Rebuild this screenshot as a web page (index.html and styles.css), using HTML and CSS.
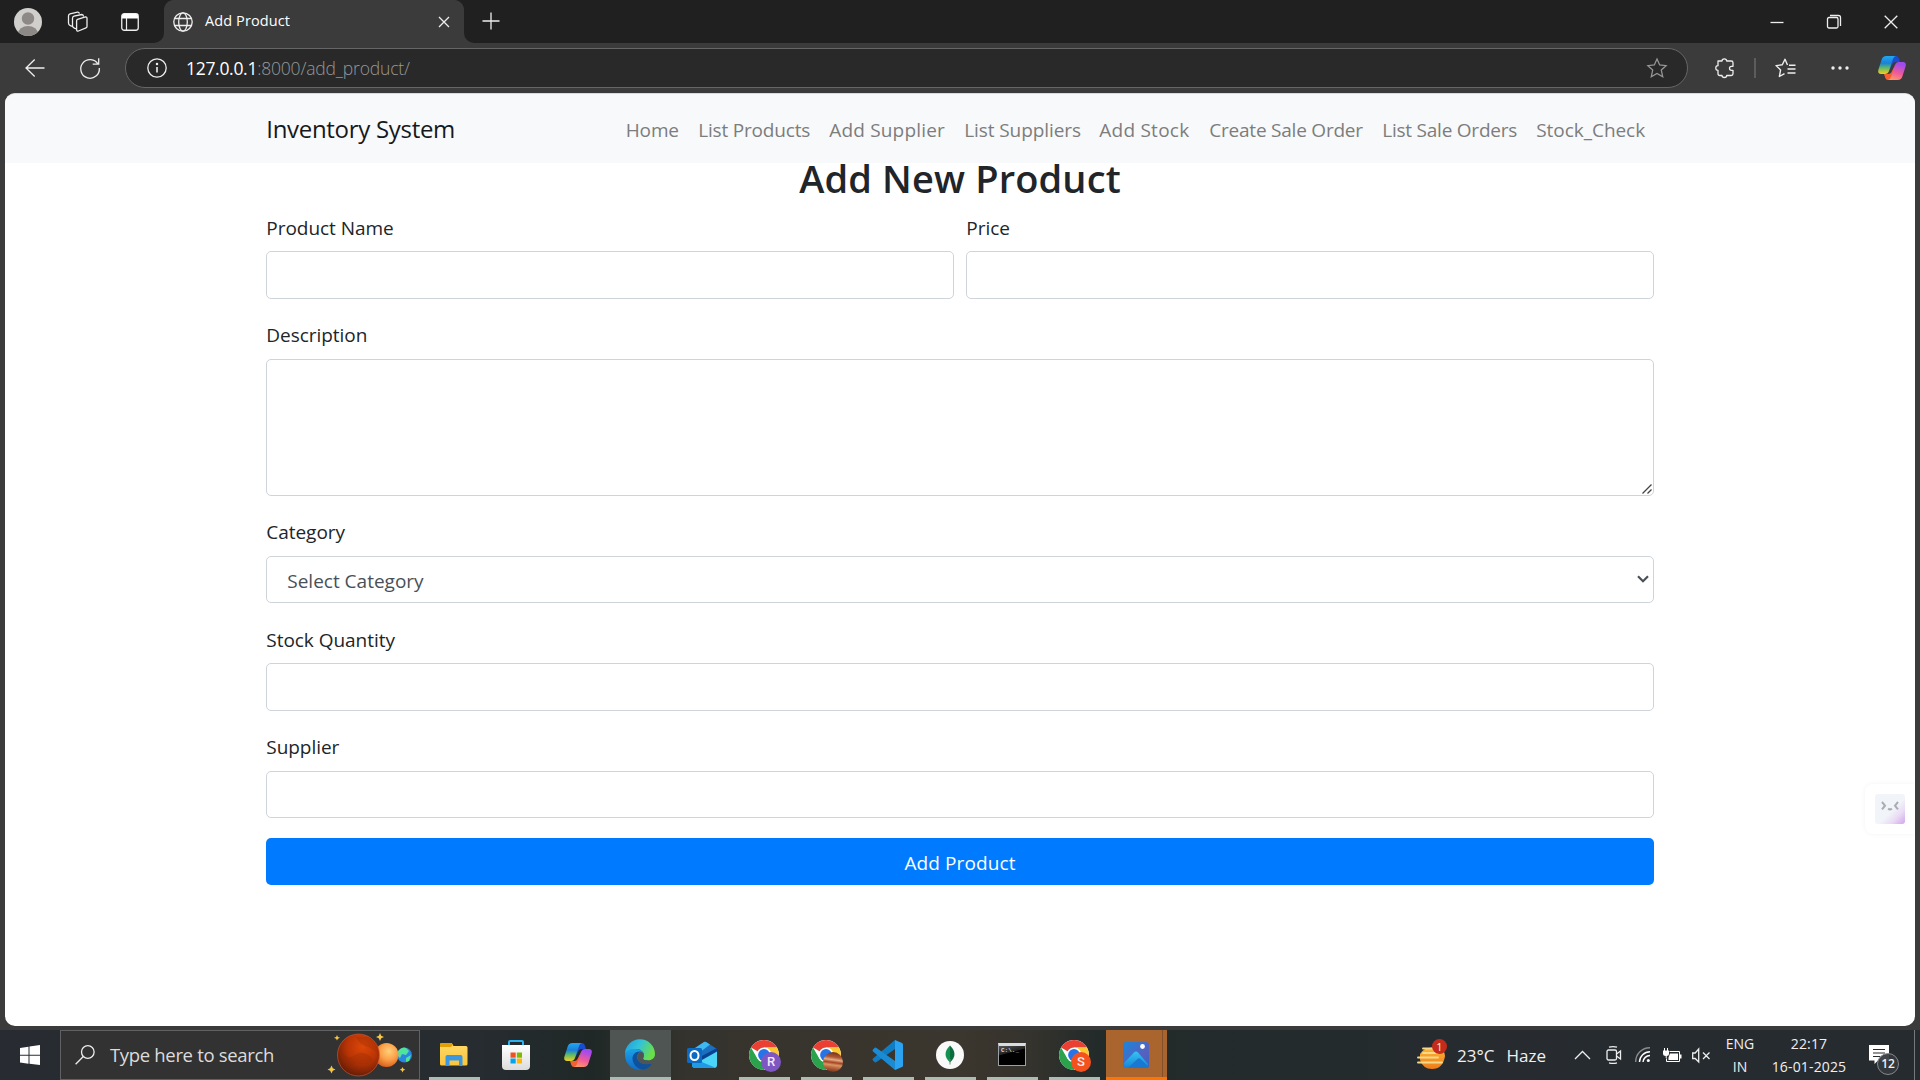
FILE: index.html
```html
<!DOCTYPE html>
<html lang="en">
<head>
<meta charset="utf-8">
<title>Add Product</title>
<link rel="stylesheet" href="styles.css">
</head>
<body>
<svg class="defs" width="0" height="0" aria-hidden="true">
  <defs>
    <linearGradient id="cpA" x1="0" y1="0" x2="0" y2="1"><stop offset="0" stop-color="#22a7f0"/><stop offset=".4" stop-color="#1a80d8"/><stop offset=".65" stop-color="#5cb86a"/><stop offset="1" stop-color="#f4cf1c"/></linearGradient>
    <linearGradient id="cpB" x1=".3" y1="0" x2="0" y2="1"><stop offset="0" stop-color="#a04af0"/><stop offset=".5" stop-color="#ee5a9c"/><stop offset="1" stop-color="#ffa25e"/></linearGradient>
    <linearGradient id="edA" x1="0" y1="0" x2="1" y2=".4"><stop offset="0" stop-color="#1b9de2"/><stop offset=".5" stop-color="#33c2d8"/><stop offset="1" stop-color="#6ade4a"/></linearGradient>
    <linearGradient id="edB" x1="0" y1="0" x2="0" y2="1"><stop offset="0" stop-color="#1ba1e8"/><stop offset="1" stop-color="#0f6cc8"/></linearGradient>
    <radialGradient id="mars" cx=".6" cy=".3" r=".75"><stop offset="0" stop-color="#dc4708"/><stop offset=".5" stop-color="#b93405"/><stop offset="1" stop-color="#5e1a05"/></radialGradient>
    <radialGradient id="venus" cx=".6" cy=".35" r=".7"><stop offset="0" stop-color="#ffd07a"/><stop offset=".5" stop-color="#fba048"/><stop offset="1" stop-color="#d65a18"/></radialGradient>
    <linearGradient id="folder" x1="0" y1="0" x2="0" y2="1"><stop offset="0" stop-color="#ffd968"/><stop offset="1" stop-color="#f9c53c"/></linearGradient>
    <linearGradient id="photo" x1="0" y1="0" x2="1" y2="1"><stop offset="0" stop-color="#1787dd"/><stop offset=".6" stop-color="#5661c0"/><stop offset="1" stop-color="#3a63c0"/></linearGradient>
    <linearGradient id="hill" x1="0" y1="0" x2="0" y2="1"><stop offset="0" stop-color="#35c4f2"/><stop offset="1" stop-color="#1483da"/></linearGradient>
    <linearGradient id="bag" x1="0" y1="0" x2="0" y2="1"><stop offset="0" stop-color="#ffffff"/><stop offset="1" stop-color="#dcdcdc"/></linearGradient>
    <linearGradient id="haze" x1="0" y1="0" x2="0" y2="1"><stop offset="0" stop-color="#ffb637"/><stop offset="1" stop-color="#ee7b1a"/></linearGradient>
    <symbol id="copilot" viewBox="0 0 28 26">
      <path d="M14 1h4q2 0 2.700 2l1.300 4h-4q-3 0-4 3l-3 6z" fill="#1a4bd0"/>
      <path d="M14 25h-4q-2 0-2.700-2l-1.300-4h4q3 0 4-3l3-6z" fill="#f4602f"/>
      <path d="M8.500 1H18q-2 0-3 3l-4 12q-1 3-4 3H3q-3.400 0-2.700-4L3.500 5q1-4 5-4z" fill="url(#cpA)"/>
      <path d="M19.500 25H10q2 0 3-3l4-12q1-3 4-3h4q3.400 0 2.700 4l-3.200 10q-1 4-5 4z" fill="url(#cpB)"/>
    </symbol>
    <symbol id="chrome" viewBox="0 0 32 32">
      <circle cx="15" cy="15" r="15" fill="#fff"/>
      <path d="M15 15 2.010 7.500A15 15 0 0 1 27.990 7.500H15z" fill="#ea4033"/>
      <path d="M2.010 7.500A15 15 0 0 0 15 30l6.500-11.250L15 15 8.500 18.750z" fill="#2ba24c"/>
      <path d="M27.990 7.500A15 15 0 0 1 15 30l6.500-11.250A7.500 7.500 0 0 0 15 7.500z" fill="#fcc934"/>
      <circle cx="15" cy="15" r="7.500" fill="#fff"/><circle cx="15" cy="15" r="5.900" fill="#2674e8"/>
    </symbol>
  </defs>
</svg>

<div class="screen">
  <header class="tabstrip">
    <div class="strip-tools">
      <svg class="avatar" width="28" height="28" viewBox="0 0 28 28"><clipPath id="av"><circle cx="14" cy="14" r="14"/></clipPath><g clip-path="url(#av)"><rect width="28" height="28" fill="#d1cfcc"/><circle cx="14" cy="10.500" r="6.200" fill="#8d8986"/><ellipse cx="14" cy="26" rx="10" ry="8" fill="#8d8986"/></g></svg>
      <svg class="workspaces line" width="22" height="22" viewBox="0 0 22 22"><path d="m10.500 8.300 8-2.300q1.500-.3 1.500 1.200v8.300q0 1-1 1.300l-7.500 3.200q-1.700.6-1.900-1.100V9.700q.1-1.100.9-1.400zM9.500 18l-2.200-.9q-1.800-.7-1.800-2.500V7.300q0-1.600 1.500-2.100l7.800-1.700q1.600 0 1.700 2M5.400 15.500l-2-.8Q1.500 14 1.500 12V5q0-1.600 1.500-2.100l7.500-1.700q1.500-.2 1.900 1.500"/></svg>
      <svg class="tabicon" width="18" height="18" viewBox="0 0 18 18"><rect x=".75" y=".75" width="16.500" height="16.500" rx="2.500" fill="none" stroke="#eee" stroke-width="1.300"/><path d="M1 5.500V3q0-2 2-2h12q2 0 2 2v2.500z" fill="#fff"/><path d="M5.500 5v12" stroke="#eee" stroke-width="1.200"/></svg>
    </div>
    <div class="tab">
      <svg class="line" width="20" height="20" viewBox="0 0 20 20"><circle cx="10" cy="10" r="9.200"/><ellipse cx="10" cy="10" rx="4.300" ry="9.200"/><path d="M1.600 6.500h16.800M1.600 13.500h16.800"/></svg>
      <span class="tab-title">Add Product</span>
      <svg class="line" width="12" height="12" viewBox="0 0 12 12"><path d="m1 1 10 10M11 1 1 11"/></svg>
    </div>
    <svg class="newtab line" width="18" height="18" viewBox="0 0 18 18"><path d="M9 .5v17M.5 9h17"/></svg>
    <div class="window-buttons">
      <svg class="line" width="14" height="14" viewBox="0 0 14 14"><path d="M.5 7.500h13"/></svg>
      <svg class="line" width="14" height="14" viewBox="0 0 14 14"><rect x=".5" y="2.500" width="10.500" height="10.500" rx="1.500"/><path d="M3 .5h8.500q2 0 2 2V11"/></svg>
      <svg class="line" width="14" height="14" viewBox="0 0 14 14"><path d="m.7.700 12.600 12.600m0-12.600L.7 13.300"/></svg>
    </div>
  </header>

  <div class="toolbar">
    <svg class="back line" width="20" height="20" viewBox="0 0 20 20"><path d="M19.500 10H1m8.700-8.500L1 10l8.700 8.500"/></svg>
    <svg class="refresh line" width="20" height="22" viewBox="0 0 20 22"><path d="M18.200 7.500A9.300 9.300 0 1 0 19.300 11M18.700 1.200v6h-6"/></svg>
    <div class="address">
      <svg class="line" width="20" height="20" viewBox="0 0 20 20"><circle cx="10" cy="10" r="9.200"/><path d="M10 9v5.500" stroke-width="1.600"/><circle cx="10" cy="6" r=".6" fill="#eee"/></svg>
      <span class="url"><b>127.0.0.1</b>:8000/add_product/</span>
      <svg class="star" width="20" height="20" viewBox="0 0 20 20"><path d="m10 1 2.700 6 6.400.7-4.800 4.400 1.400 6.600L10 15.400l-5.700 3.300 1.400-6.600L.9 7.700 7.300 7z"/></svg>
    </div>
    <div class="toolbar-right">
      <svg class="line puzzle" width="20" height="20" viewBox="0 0 20 20"><path d="M3.500 3H7Q7 .8 9.300.8T11.700 3h4.500q1.800 0 1.800 1.800v3.500h-1.500a2 2 0 0 0 0 4H18v3.400q0 1.800-1.800 1.800h-4.500q0 2-2.300 2T7 17.500H4.800q-1.800 0-1.800-1.800v-3.300Q.8 12.400.8 10T3 7.700V3z" stroke-linejoin="round"/></svg>
      <i class="divider"></i>
      <svg class="line favs" width="21" height="20" viewBox="0 0 21 20"><path d="M12.500 7 10 1.200 7.300 6.800l-6.300.8 4.600 4.300L4.400 18.500 9.500 15.700M14 7.200h6.500M12.500 11H20.500M12.500 15H20.500" stroke-width="1.400" stroke-linejoin="round"/></svg>
      <svg class="dots" width="18" height="4" viewBox="0 0 18 4"><circle cx="2" cy="2" r="1.700"/><circle cx="9" cy="2" r="1.700"/><circle cx="16" cy="2" r="1.700"/></svg>
      <svg class="cp" width="28" height="26"><use href="#copilot"/></svg>
    </div>
  </div>

  <main class="page">
    <nav class="navbar">
      <div class="container nav-row">
        <span class="brand">Inventory System</span>
        <div class="links">
          <a class="l1">Home</a><a class="l2">List Products</a><a class="l3">Add Supplier</a><a class="l4">List Suppliers</a><a class="l5">Add Stock</a><a class="l6">Create Sale Order</a><a class="l7">List Sale Orders</a><a class="l8">Stock_Check</a>
        </div>
      </div>
    </nav>
    <form class="container form">
      <h2>Add New Product</h2>
      <div class="row">
        <div class="group"><label>Product Name</label><div class="control"></div></div>
        <div class="group"><label>Price</label><div class="control"></div></div>
      </div>
      <div class="group"><label>Description</label><div class="control area"><svg width="10" height="10" viewBox="0 0 10 10"><path d="M.5 9.500l9-9M5.500 9.500l4-4"/></svg></div></div>
      <div class="group"><label>Category</label><div class="control select"><span>Select Category</span><svg width="12" height="8" viewBox="0 0 12 8"><path d="m1 1.200 5 5 5-5"/></svg></div></div>
      <div class="group"><label>Stock Quantity</label><div class="control"></div></div>
      <div class="group"><label>Supplier</label><div class="control"></div></div>
      <div class="submit"><span>Add Product</span></div>
    </form>
    <div class="assistant">
      <div class="face"><svg width="18" height="10" viewBox="0 0 18 10"><path d="m1 1 3 3.700-3 3.700M17 1l-3 3.700 3 3.700M7.200 7.500q1.800 2 3.600 0"/></svg></div>
    </div>
  </main>

  <footer class="taskbar">
    <div class="start"><svg width="20" height="20" viewBox="0 0 20 20" fill="#fff"><path d="M0 3l8.500-1.300v8H0zM9.500 1.500 20 0v9.700H9.500zM0 10.700h8.500v8L0 17.400zM9.500 10.700H20V20L9.500 18.700z"/></svg></div>
    <div class="search">
      <svg class="line" width="20" height="20" viewBox="0 0 20 20"><circle cx="12.800" cy="7" r="6.300"/><path d="M8.300 11.500.6 19.300"/></svg>
      <span>Type here to search</span>
      <svg class="planets" width="84" height="44" viewBox="0 0 84 44">
        <circle cx="76.500" cy="22" r="7.500" fill="#2a86e0"/><path d="M70 18q4-5 8-3l3 3-3 4-4-1-2 4-2-2zM78 25l5-3-2 6-3 1z" fill="#50e39a"/>
        <circle cx="58.500" cy="22" r="12" fill="url(#venus)"/>
        <circle cx="30.500" cy="22" r="21" fill="url(#mars)" stroke="#d45c36" stroke-width=".6"/>
        <path d="M13 18q6 10 14 4t18 4q-6 8-16 4-10 6-16-12zM28 4q4 8 12 10t10 10q3-14-9-20z" fill="#8c2804" opacity=".25"/>
        <g fill="#f6c644"><path d="m52 0 1.200 2.800L56 4l-2.800 1.200L52 8l-1.200-2.800L48 4l2.800-1.200zM9 2l.9 1.900 2.100.9-2.100.9L9 7.600l-.9-1.900L6 4.800l2.100-.9zM3.500 32.500l1.300 2.700 2.700 1.300-2.700 1.300-1.300 2.700-1.300-2.700-2.700-1.300 2.700-1.300zM74.500 34l.9 1.800 1.900.9-1.900.9-.9 1.900-.9-1.900-1.900-.9 1.900-.9z"/></g>
      </svg>
    </div>
    <div class="apps">
      <div class="app open"><svg width="28" height="24" viewBox="0 0 28 24"><path d="M0 1.500Q0 0 1.500 0h10L13.500 3H26q1.500 0 1.500 1.500V21q0 1.500-1.500 1.500H1.500Q0 22.500 0 21z" fill="url(#folder)"/><path d="M0 1.500Q0 0 1.500 0h10l1.500 1.500L11 4H0z" fill="#e0a006"/><path d="M5.500 23V14q0-2 2-2h13q2 0 2 2v9H19v-5.500H9.500V23z" fill="#3b97df"/></svg></div>
      <div class="app"><svg width="30" height="30" viewBox="0 0 30 30"><path d="M8 7V2q0-1 1-1h12q1 0 1 1v5" fill="none" stroke="#2bb1ee" stroke-width="2"/><path d="M1 5h28v21q0 4-4 4H5q-4 0-4-4z" fill="url(#bag)"/><path d="M9.500 12.500h5.200v5.200H9.500z" fill="#f25022"/><path d="M15.800 12.500H21v5.200h-5.200z" fill="#7fba00"/><path d="M9.500 18.500h5.200v5H9.500z" fill="#00a4ef"/><path d="M15.800 18.500H21v5h-5.200z" fill="#ffb900"/></svg></div>
      <div class="app"><svg width="28" height="26"><use href="#copilot"/></svg></div>
      <div class="app active"><svg width="30" height="30" viewBox="0 0 30 30"><path d="M0 14.500A15 15 0 0 1 30 14c0 4-3 6.500-7 6.500-3 0-5-1-5-2 0-.8.900-1.500.9-3.500 0-3-3-6-7.500-6C6 9 1 12 0 14.500z" fill="url(#edA)"/><path d="M0 14.500C1 9.500 6 8.500 11 9c5 .5 7.900 3 7.900 6 0 2-.9 2.700-.9 3.500 0 1 2 2 5 2L18 29.700C8 31.500 0 24.500 0 14.500z" fill="url(#edB)"/><path d="M16 11.700c-3 1-4.500 4-3.500 7.300 1.500 4 6 6.500 14.500 4.500-1.500 3-5 5.500-9 6.300C12 29 7.500 24 7.500 18.500c0-4.500 4-7.500 8.500-6.800z" fill="#10519c"/><path d="M18.900 15c0 2-.9 2.700-.9 3.500 0 1 2 2 5 2 2 0 4-.6 5.300-2L27 23.500c-8.500 2-13-.5-14.500-4.500-.8-3 .4-6 3.500-7.300 2 .5 2.900 2 2.900 3.300z" fill="#4f5552"/></svg></div>
      <div class="app"><svg class="outlook" width="30" height="28" viewBox="0 0 30 28"><path d="M5 9 17 1q1-.6 2 0l11 7v8H5z" fill="#1b6fc0"/><path d="m5 9 12-8q1-.6 2 0l4 2.600L12 12z" fill="#3fb8ef"/><path d="M13 17 30 9v15q0 3-3 3H9q-4 0-4-3z" fill="#4bd5f7"/><path d="M13 16 30 7v3.500L15 19z" fill="#0c418f"/><path d="m5 17 23 9.500-1 .5H8q-3 0-3-3z" fill="#1e9be4"/><rect y="7" width="15" height="15" rx="1.500" fill="#0b6bc4"/><ellipse cx="7.500" cy="14.500" rx="4" ry="4.600" fill="none" stroke="#fff" stroke-width="2"/></svg></div>
      <div class="app open"><div class="badged"><svg width="32" height="32"><use href="#chrome"/></svg><b class="purple">R</b></div></div>
      <div class="app open"><div class="badged"><svg width="32" height="32"><use href="#chrome"/></svg><b class="jupiter"></b></div></div>
      <div class="app open"><svg width="30" height="30" viewBox="0 0 30 30"><path d="M22 0v9L3.500 22Q2 23 1 21.500l-1-1q-1-1 0-2z" fill="#0f7dc5"/><path d="M22 30v-9L3.500 8Q2 7 1 8.500l-1 1q-1 1 0 2z" fill="#1b8bd3"/><path d="m22 0 7 3q1 .5 1 1.500v21q0 1-1 1.500l-7 3z" fill="#2ca3f1"/></svg></div>
      <div class="app open"><svg width="28" height="28" viewBox="0 0 28 28"><circle cx="14" cy="14" r="14" fill="#f9f9f9"/><path d="M14 4.500q-9 9 0 17z" fill="#12924f"/><path d="M14 4.500q9 9 0 17z" fill="#0a6b3d"/><path d="M14 18v5.500" stroke="#6a8f78"/></svg></div>
      <div class="app open"><div class="cmd"><span>C:\._</span></div></div>
      <div class="app open"><div class="badged"><svg width="32" height="32"><use href="#chrome"/></svg><b class="orange">S</b></div></div>
      <div class="app alert"><svg width="26" height="26" viewBox="0 0 26 26"><rect width="26" height="26" rx="3" fill="url(#photo)"/><path d="M1 21 11 10.500q2-2 4 0L25 22v2q-1 2-3 2H3q-3-1-2-5z" fill="url(#hill)"/><path d="m7 24 7.500-7q1.500-1.500 3 0L26 25q-1 1-3 1H5z" fill="#1a78d2"/><circle cx="19.500" cy="4.500" r="2.400" fill="#fff"/></svg></div>
    </div>
    <div class="tray">
      <div class="weather-icon"><svg width="30" height="30" viewBox="0 0 30 30"><path d="M3 14q5-8 18-6 7 2 7 8-2 13-13 13Q6 29 3 20z" fill="url(#haze)"/><path d="M6 8.500h9M6 13h16M1 17.500h20M1 22.500h24" stroke="#f3d98a" stroke-width="1.900" stroke-linecap="round"/></svg><b>1</b></div>
      <span class="weather"><span>23°C</span><span>Haze</span></span>
      <svg class="line chev" width="17" height="10" viewBox="0 0 17 10"><path d="m1 9 7.500-7.500L16 9"/></svg>
      <svg class="line meet" width="16" height="18" viewBox="0 0 16 18"><rect x="1" y="4" width="9.500" height="10" rx="1.500"/><path d="m10.500 8 4-3v8l-4-3M3 1.200Q7 0 11 1.200M3 16.800q4 1.200 8 0"/></svg>
      <svg class="wifi" width="16" height="16" viewBox="0 0 16 16"><path d="M.7 15A14 14 0 0 1 15 .8" opacity=".45"/><path d="M4.500 15A10.500 10.500 0 0 1 15 4.700M8 15a7 7 0 0 1 7-6.500"/><circle cx="13.300" cy="13.500" r="1.500" fill="#fff" stroke="none"/></svg>
      <svg class="battery" width="20" height="15" viewBox="0 0 20 15"><path d="M7.500 3.500h10v10h-13V10.500" fill="none" stroke="#fff"/><path d="M8 5.500h8v6.500H6.500V9.500zM18 6.500h1.500v4H18zM1 2.500h6V6Q7 8 4.700 8v2h-1V8Q1 8 1 6zM2 0h1v3H2zM5 0h1v3H5z" fill="#fff"/></svg>
      <svg class="line sound" width="19" height="15" viewBox="0 0 19 15"><path d="M.7 5h2.500L6.700 1v13L3.200 10.500H.7zM11 4.500l6.500 6.500m0-6.500L11 11"/></svg>
      <div class="lang"><span>ENG</span><span>IN</span></div>
      <div class="clock"><span>22:17</span><span>16-01-2025</span></div>
      <div class="notice"><svg width="20" height="20" viewBox="0 0 20 20"><path d="M0 0h20v15.500H9L5.500 19v-3.500H0z" fill="#fff"/><path d="M4 4.500h12M4 8h12M4 11.500h7" stroke="#262b2f" stroke-width="1.200"/></svg><b>12</b></div>
    </div>
  </footer>
</div>
</body>
</html>
```
FILE: styles.css
```css
* { box-sizing: border-box; }
body { margin: 0; font-family: "Open Sans", "Noto Sans", sans-serif; overflow: hidden; }
svg { display: block; flex: none; overflow: visible; }
.defs { position: absolute; }
.line { fill: none; stroke: #eee; stroke-width: 1.300; }
.screen { width: 1920px; height: 1080px; background: #3b3b3b; display: flex; flex-direction: column; }

.tabstrip { height: 43px; display: flex; align-items: center; flex: none; background: linear-gradient(#3b3b3b, #3b3b3b) 150px 0 / 330px 43px no-repeat #202020; }
.strip-tools { width: 164px; height: 43px; display: flex; align-items: center; padding-left: 14px; background: #202020; border-bottom-right-radius: 10px; }
.workspaces { margin-left: 25px; }
.tabicon { margin-left: 32px; }
.tab { width: 300px; height: 43px; display: flex; align-items: center; padding: 0 14px 0 9px; background: radial-gradient(circle at 10px 10px, #3b3b3b 9.500px, #202020 10.500px) 0 0 / 10px 10px no-repeat, radial-gradient(circle at 0 10px, #3b3b3b 9.500px, #202020 10.500px) 100% 0 / 10px 10px no-repeat, #3b3b3b; }
.tab-title { color: #fff; font-size: 14.500px; line-height: 20px; width: 233px; margin-left: 12px; margin-top: -2px; letter-spacing: .1px; white-space: nowrap; }
.newtab { box-sizing: content-box; height: 18px; padding: 12px 18px 13px; background: #202020; border-bottom-left-radius: 10px; }
.window-buttons { margin-left: auto; margin-right: 22px; display: flex; gap: 43px; }

.toolbar { height: 50px; display: flex; align-items: center; flex: none; }
.back { margin-left: 25px; }
.refresh { margin-left: 35px; }
.address { width: 1563px; height: 40px; margin-left: 25px; border: 1px solid #666; border-radius: 20px; background: #292929; display: flex; align-items: center; padding: 0 20px 0 21px; }
.url { color: #989898; font-weight: 300; font-size: 17.500px; line-height: 24px; margin-left: 19px; margin-top: -1px; letter-spacing: -.17px; white-space: nowrap; }
.url b { color: #fff; font-weight: 400; letter-spacing: -.3px; }
.star { margin-left: auto; fill: none; stroke: #969696; stroke-width: 1.300; }
.toolbar-right { display: flex; align-items: center; margin-left: 27px; }
.divider { width: 2px; height: 20px; background: #5c5c5c; margin: 0 19px 0 19px; }
.dots { margin-left: 35px; fill: #eee; }
.cp { margin-left: 29px; }

.page { position: relative; width: 1910px; height: 933px; margin-left: 5px; background: #fff; border-radius: 10px; overflow: hidden; flex: none; border-top: 1px solid #dadada; }
.container { width: 1387.500px; margin: 0 auto; }
.navbar { height: 69px; background: #f8f9fb; }
.nav-row { height: 69px; display: flex; align-items: center; justify-content: space-between; }
.brand { font-size: 24px; color: #16181b; line-height: 36px; letter-spacing: -.3px; white-space: nowrap; }
.links { display: flex; gap: 20px; padding-right: 9px; font-size: 19px; line-height: 30px; color: #7c7d7d; margin-top: 2px; white-space: nowrap; }
.l1 { width: 52.500px; letter-spacing: -.15px; }
.l2 { width: 111px; letter-spacing: -.19px; }
.l3 { width: 115px; letter-spacing: .18px; }
.l4 { width: 115px; letter-spacing: -.09px; }
.l5 { width: 90px; letter-spacing: .25px; }
.l6 { width: 153px; letter-spacing: -.22px; }
.l7 { width: 134px; letter-spacing: -.23px; }
.l8 { width: 108.500px; letter-spacing: -.05px; }
.form { margin-top: -10px; color: #212529; font-size: 19px; }
h2 { margin: 0 0 10px; height: 48px; line-height: 50px; font-size: 38px; font-weight: 600; letter-spacing: .15px; text-align: center; }
.row { display: flex; gap: 12.500px; }
.group { flex: 1; margin-bottom: 20px; }
label { display: block; line-height: 30px; padding-top: 1.500px; margin-bottom: 8.500px; letter-spacing: -.03px; }
.control { height: 47.500px; border: 1px solid #ced4da; border-radius: 5px; background: #fff; }
.control.area { height: 137px; display: flex; justify-content: flex-end; align-items: flex-end; padding: 1px; }
.area svg { fill: none; stroke: #444; stroke-width: 1.300; }
.select { display: flex; align-items: center; justify-content: space-between; color: #495057; padding: 0 4px 0 20px; }
.select span { padding-top: 3px; }
.select svg { fill: none; stroke: #495057; stroke-width: 2.200; }
.submit { height: 47px; background: #007bff; color: #fff; border-radius: 5px; display: flex; align-items: center; justify-content: center; line-height: 30px; padding-top: 3px; letter-spacing: .1px; }
.assistant { position: absolute; right: 0; top: 690px; width: 50px; height: 50px; border-radius: 8px 0 0 8px; background: #fff; box-shadow: 0 0 5px #0000000d; padding: 10px; }
.face { width: 30px; height: 30px; border-radius: 3px; background: linear-gradient(135deg, #f1f5f9 55%, #eadcf5 75%, #cfa5ec); padding: 7px 6px; }
.face svg { fill: none; stroke: #a9adb1; stroke-width: 2; }

.taskbar { height: 50px; margin-top: 4px; flex: none; display: flex; background: linear-gradient(90deg, #282c32 0, #272c31 470px, #1f2827 590px, #35332d 690px, #3b362e 960px, #35332d 1030px, #222a2a 1100px, #232b2c 1300px, #272b30 1500px, #262b2f); }
.start { width: 60px; padding: 15px 20px; }
.search { width: 360px; border: 1px solid #606163; background: #323232; display: flex; align-items: center; padding-left: 14px; }
.search span { color: #dcdcdc; font-size: 18.500px; line-height: 26px; margin-left: 15px; width: 218px; letter-spacing: -.33px; white-space: nowrap; }
.apps { display: flex; gap: 1px; margin-left: 4px; }
.app { width: 61px; height: 50px; display: flex; align-items: center; justify-content: center; padding-right: 1px; }
.app.open { background: linear-gradient(#a9bdb2, #a9bdb2) 5px 47px / 51px 3px no-repeat; }
.app.active { background: #4f5552; border-bottom: 3px solid #a9bdb2; padding-top: 3px; }
.app.alert { background: linear-gradient(90deg, #a9652d 56px, #84502a 56px 57px, #a9652d 57px); border-bottom: 3px solid #ff7300; padding-top: 3px; }
.badged { position: relative; width: 30px; height: 30px; }
.badged b { position: absolute; left: 12px; top: 12px; width: 20px; height: 20px; border-radius: 50%; color: #f5e9fa; font: 500 13px/20px Roboto, sans-serif; text-align: center; }
.purple { background: #7e57c2; }
.orange { background: #f4511e; }
.jupiter { background: linear-gradient(8deg, #5d2717, #bb633c 25%, #d99663 37%, #a64424 48%, #e2ad83 60%, #b15734 72%, #602b1c); }
.cmd { width: 28px; height: 23px; border: 1px solid #9aa0a6; border-top: 3px solid #d8dde2; background: linear-gradient(165deg, #555 0, #222 35%, #000 38%); display: flex; margin-top: -2px; }
.cmd span { color: #ddd; font: 700 6px/7px "Liberation Mono", monospace; padding: 1px 2px; }

.tray { margin-left: auto; display: flex; align-items: center; color: #f0f0f0; }
.weather-icon { position: relative; width: 30px; height: 30px; }
.weather-icon b { position: absolute; right: 0; top: -1px; width: 15px; height: 15px; border-radius: 50%; background: #c42b1c; font: 400 11px/15px "Open Sans", sans-serif; text-align: center; }
.weather { display: flex; gap: 12px; margin-left: 10px; width: 117px; font-size: 17px; line-height: 24px; padding-top: 1px; }
.chev { margin-right: 15px; }
.meet { margin-right: 13px; }
.wifi { fill: none; stroke: #fff; stroke-width: 1.400; margin-right: 11px; }
.battery { margin-right: 10px; }
.sound { margin-right: 14px; }
.lang, .clock { display: flex; flex-direction: column; align-items: center; font-size: 14px; line-height: 23px; white-space: nowrap; }
.lang { width: 30px; }
.clock { width: 76px; margin-left: 16px; letter-spacing: .15px; }
.notice { position: relative; width: 46px; height: 50px; margin-left: 22px; margin-right: 5px; padding-top: 15px; border-right: 1px solid #767a7d; }
.notice b { position: absolute; left: 8px; top: 23px; width: 22px; height: 22px; border: 1px solid #85898c; border-radius: 50%; background: #35393dee; font: 600 12px/20px "Open Sans", sans-serif; text-align: center; }
```
